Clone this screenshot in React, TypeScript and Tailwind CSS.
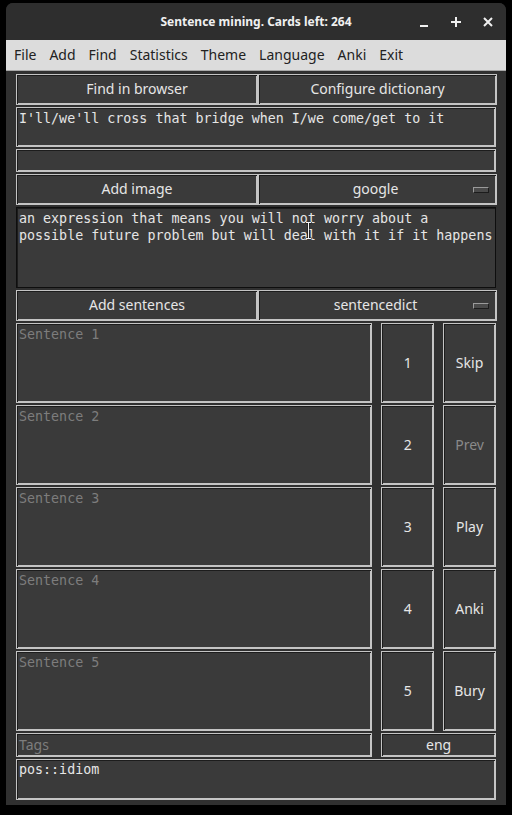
import React from 'react';

const ui = "font-['Noto_Sans','DejaVu_Sans',sans-serif]";
const mono = "font-['DejaVu_Sans_Mono','Liberation_Mono',monospace] text-[13.33px] leading-[17px]";
const box =
  'border border-[#c4c4c4] bg-[#3a3a3a] shadow-[inset_1px_1px_0_#1c1c1c,inset_-1px_-1px_0_#c4c4c4]';
const btnBase = `${box} ${ui} flex items-center justify-center pb-[2px] text-[14px]`;
const btn = `${btnBase} text-[#e6e6e6]`;

function OptionMenu({ label }: { label: string }) {
  return (
    <div className={`${btn} relative`}>
      <span className="-ml-[4px]">{label}</span>
      <span className="absolute right-[7px] top-1/2 h-[6px] w-[16px] -translate-y-1/2 border border-t-[#9a9a9a] border-l-[#9a9a9a] border-b-[#1c1c1c] border-r-[#1c1c1c] bg-[#4a4a4a]" />
    </div>
  );
}

function SentenceRow({ n, action, dim }: { n: number; action: string; dim?: boolean }) {
  return (
    <div className="flex h-[80px] gap-[9px]">
      <div className={`${box} ${mono} w-[357px] px-[2px] pt-[2px] text-[#7d7d7d]`}>Sentence {n}</div>
      <div className={`${btn} w-[53px]`}>{n}</div>
      <div className={`${btnBase} w-[53px] ${dim ? 'text-[#8a8a8a]' : 'text-[#e6e6e6]'}`}>{action}</div>
    </div>
  );
}

export default function App() {
  const menu = ['File', 'Add', 'Find', 'Statistics', 'Theme', 'Language', 'Anki', 'Exit'];
  return (
    <div className="h-[815px] w-[512px] bg-black px-[6px] pb-[10px] pt-[3px]">
      <div className="flex h-full flex-col overflow-hidden rounded-t-[7px] bg-[#303030]">
        {/* title bar */}
        <div className={`${ui} relative flex h-[37px] shrink-0 items-center justify-center bg-[#2e2e2e] text-[12px] font-bold text-[#f0f0f0]`}>
          <span>Sentence mining. Cards left: 264</span>
          <div className="absolute right-[13px] top-0 flex h-full items-center gap-[22px]">
            <svg width="10" height="10" viewBox="0 0 10 10">
              <rect x="1" y="8" width="8" height="2" fill="#f0f0f0" />
            </svg>
            <svg width="10" height="10" viewBox="0 0 10 10">
              <rect x="0" y="4" width="10" height="2" fill="#f0f0f0" />
              <rect x="4" y="0" width="2" height="10" fill="#f0f0f0" />
            </svg>
            <svg width="10" height="10" viewBox="0 0 10 10">
              <path d="M1 1L9 9M9 1L1 9" stroke="#f0f0f0" strokeWidth="2" />
            </svg>
          </div>
        </div>

        {/* menu bar */}
        <div className={`${ui} flex h-[31px] shrink-0 items-center gap-[13px] border-b border-[#a8a8a8] bg-[#dcdcdc] pb-[2px] pl-[8px] text-[14px] text-[#222]`}>
          {menu.map((m) => (
            <span key={m}>{m}</span>
          ))}
        </div>

        {/* content */}
        <div className="relative flex flex-col gap-[2px] px-[10px] pt-[3px]">
          <div className="grid h-[31px] grid-cols-[242px_239px] gap-0">
            <div className={btn}>Find in browser</div>
            <div className={btn}>Configure dictionary</div>
          </div>
          <div className={`${box} ${mono} h-[40px] px-[2px] pt-[2px] text-[#e6e6e6]`}>
            I'll/we'll cross that bridge when I/we come/get to it
          </div>
          <div className={`${box} h-[23px]`} />
          <div className="grid h-[31px] grid-cols-[242px_239px]">
            <div className={btn}>Add image</div>
            <OptionMenu label="google" />
          </div>
          <div className={`${mono} h-[81px] border border-[#0e0e0e] bg-[#3a3a3a] px-[2px] pt-[2px] text-[#e6e6e6] shadow-[inset_1px_1px_0_#1c1c1c]`}>
            an expression that means you will not worry about a
            <br />
            possible future problem but will deal with it if it happens
          </div>
          <div className="grid h-[31px] grid-cols-[242px_239px]">
            <div className={btn}>Add sentences</div>
            <OptionMenu label="sentencedict" />
          </div>
          <SentenceRow n={1} action="Skip" />
          <SentenceRow n={2} action="Prev" dim />
          <SentenceRow n={3} action="Play" />
          <SentenceRow n={4} action="Anki" />
          <SentenceRow n={5} action="Bury" />
          <div className="flex h-[24px] gap-[9px]">
            <div className={`${box} ${ui} flex w-[357px] items-center px-[2px] pb-[2px] text-[14px] text-[#7d7d7d]`}>Tags</div>
            <div className={`${btn} w-[115px]`}>eng</div>
          </div>
          <div className={`${box} ${mono} h-[41px] px-[2px] pt-[1px] text-[#e6e6e6]`}>pos::idiom</div>

          {/* mouse I-beam cursor */}
          <svg className="absolute left-[299px] top-[151px]" width="7" height="17" viewBox="0 0 7 17">
            <path d="M0.5 0.5H6.5M3.5 0.5V16.5M0.5 16.5H6.5" stroke="#111" strokeWidth="2" />
            <path d="M1 0.5H6M3.5 0.5V16.5M1 16.5H6" stroke="#f4f4f4" strokeWidth="1" />
          </svg>
        </div>
      </div>
    </div>
  );
}
